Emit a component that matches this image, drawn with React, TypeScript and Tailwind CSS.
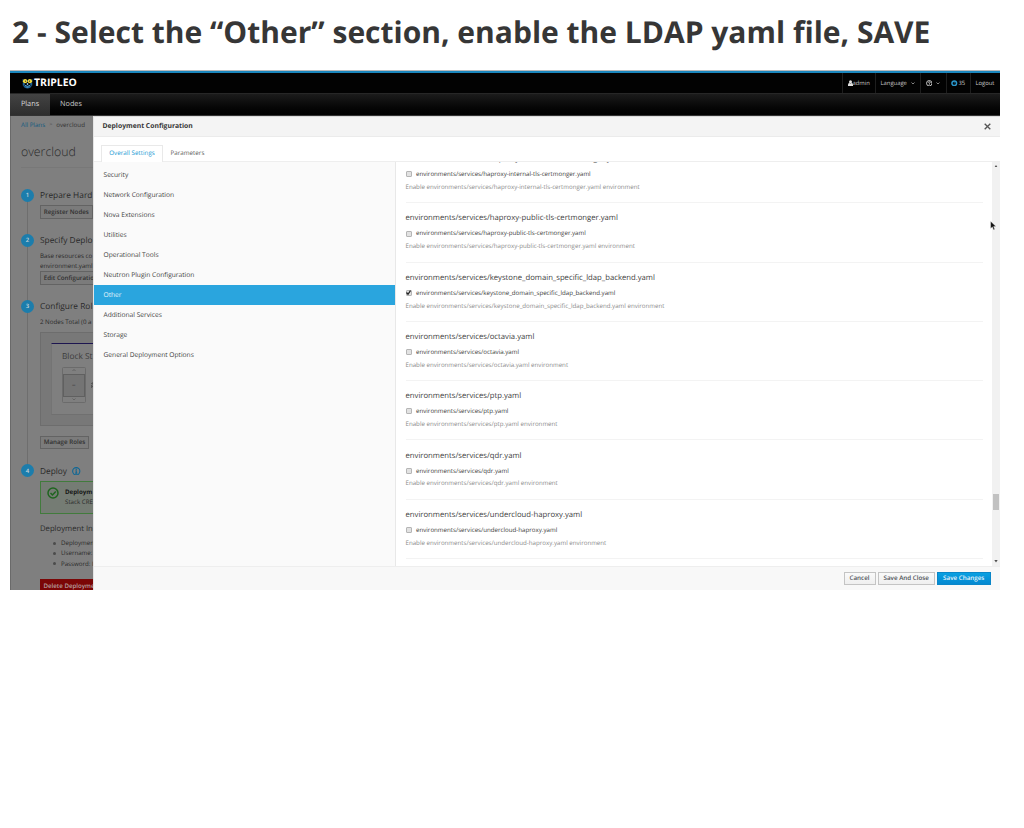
import type { ReactNode } from 'react';

const categories = [
  'Security',
  'Network Configuration',
  'Nova Extensions',
  'Utilities',
  'Operational Tools',
  'Neutron Plugin Configuration',
  'Other',
  'Additional Services',
  'Storage',
  'General Deployment Options',
];

const environments = [
  { name: 'haproxy-internal-tls-certmonger', on: false },
  { name: 'haproxy-public-tls-certmonger', on: false },
  { name: 'keystone_domain_specific_ldap_backend', on: true },
  { name: 'octavia', on: false },
  { name: 'ptp', on: false },
  { name: 'qdr', on: false },
  { name: 'undercloud-haproxy', on: false },
];

function Chevron({ up = false }: { up?: boolean }) {
  return (
    <svg viewBox="0 0 8 5" className="h-[2.500px] w-[4px]" fill="none" stroke="currentColor" strokeWidth="1.3">
      <path d={up ? 'M1 4l3-3 3 3' : 'M1 1l3 3 3-3'} />
    </svg>
  );
}

function Logo() {
  return (
    <svg viewBox="0 0 22 22" className="h-[11px] w-[11px]">
      <path d="M1 2l3 2h14l3-2v5h-20z" fill="#1c4f78" />
      <path d="M1.500 9h4v6h-4zM16.500 9h4v6h-4z" fill="#1c6399" />
      <path d="M2 14c2 9.500 16 9.500 18 0l-3 1.500H5z" fill="#1d5f92" />
      <circle cx="6.200" cy="6.300" r="4.300" fill="#f3dc3a" />
      <circle cx="15.800" cy="6.300" r="4.300" fill="#f3dc3a" />
      <circle cx="7" cy="6.300" r="1.300" fill="#333" />
      <circle cx="15" cy="6.300" r="1.300" fill="#333" />
      <path d="M11 9.500l2 2.500-2 2.500-2-2.500z" fill="#9fd0ee" />
      <path d="M6 15h3M13 15h3M9 18h4" stroke="#6fbce6" strokeWidth="1.600" />
    </svg>
  );
}

function TopItem({ width, children }: { width: string; children: ReactNode }) {
  return (
    <div className={`flex h-full shrink-0 items-center border-l border-[#1e1e1e] pl-[4.500px] ${width}`}>{children}</div>
  );
}

function TopBar() {
  return (
    <header className="shrink-0">
      <div className="h-px bg-[#b9babb]" />
      <div className="h-[2px] bg-[#1b86bd]" />
      <div className="flex h-[20px] items-center justify-between bg-[#020202]">
        <div className="flex items-center pl-[12px]">
          <Logo />
          <span className="ml-[1px] pt-px text-[10.400px] leading-none font-bold text-white">TRIPLEO</span>
        </div>
        <div className="flex h-full text-[5.850px] leading-none text-[#c9c9c9]">
          <TopItem width="w-[33px]">
            <svg viewBox="0 0 10 12" className="h-[6px] w-[5px]" fill="#e3e3e3">
              <circle cx="5" cy="3.4" r="3" />
              <path d="M0 12c-.3-4 1-6 2.800-6 1.400 1.200 3 1.200 4.400 0 1.800 0 3.100 2 2.800 6z" />
            </svg>
            <span className="pt-px">admin</span>
          </TopItem>
          <TopItem width="w-[45px]">
            <span className="pt-px">Language</span>
            <span className="ml-[4.500px]"><Chevron /></span>
          </TopItem>
          <TopItem width="w-[25.500px]">
            <svg viewBox="0 0 12 12" className="h-[6.500px] w-[6.500px]" fill="none" stroke="#d3d3d3" strokeWidth="1.7">
              <circle cx="6" cy="6" r="5" />
              <path d="M4.300 4.800c.2-2.200 3.600-2 3.400 0-.1 1.100-1.700 1-1.700 2.300M6 8v1.400" />
            </svg>
            <span className="ml-[4px]"><Chevron /></span>
          </TopItem>
          <TopItem width="w-[24.500px]">
            <svg viewBox="0 0 12 12" className="mr-[1px] h-[6.500px] w-[6.500px]" fill="none" stroke="#2a95c9">
              <circle cx="6" cy="6" r="4.300" strokeWidth="2.800" />
              <path d="M6 3v3.500" strokeWidth="1" />
            </svg>
            <span className="pt-px">35</span>
          </TopItem>
          <TopItem width="w-[30px]"><span className="pt-px">Logout</span></TopItem>
        </div>
      </div>
      <nav className="flex h-[22.500px] border-t border-b border-t-[#272727] border-b-[#333] bg-linear-to-b from-[#1c1c1c] to-[#010101] text-[7.300px] leading-none">
        <div className="flex w-[40px] items-center justify-center bg-linear-to-b from-[#434343] to-[#2e2e2e] pt-px text-[#dcdcdc]">Plans</div>
        <div className="flex items-center pt-px pl-[10px] text-[#c4c4c4]">Nodes</div>
      </nav>
    </header>
  );
}

function Step({ n, height, last = false, children }: { n: number; height: string; last?: boolean; children: ReactNode }) {
  return (
    <section className={`flex shrink-0 ${height}`}>
      <div className="ml-[10px] flex w-[13px] shrink-0 flex-col items-center">
        <div className="flex h-[13px] w-[13px] shrink-0 items-center justify-center rounded-full bg-[#1c7dac] text-[6px] leading-none font-semibold text-[#c3d3da]">{n}</div>
        {!last && <div className="w-px flex-1 bg-[#6e6e6e]" />}
      </div>
      <div className="ml-[6px] flex min-w-0 flex-1 flex-col items-start overflow-hidden whitespace-nowrap">{children}</div>
    </section>
  );
}

function DimButton({ children, open = false }: { children: ReactNode; open?: boolean }) {
  return (
    <div
      className={`flex h-[13.500px] shrink-0 items-center border border-[#636363] bg-[#7b7b7b] px-[2.800px] text-[6.200px] leading-none font-semibold text-[#303030] ${
        open ? 'border-r-0 pr-0' : ''
      }`}
    >
      {children}
    </div>
  );
}

function PlanPage() {
  return (
    <aside className="flex w-[83px] shrink-0 flex-col overflow-hidden border-l border-[#6a6a6a] bg-[#7f7f7f] text-[#2a2a2a]">
      <div className="h-[73px] shrink-0 pl-[10px] whitespace-nowrap">
        <div className="flex h-[19px] items-center text-[6.200px] leading-none">
          <span className="text-[#125a80]">All Plans</span>
          <span className="mx-[4px] text-[5.500px] text-[#4c4c4c]">&gt;</span>
          <span className="text-[#333]">overcloud</span>
        </div>
        <div className="flex h-[33.500px] items-center border-b border-[#787878] pt-[2.500px] text-[12.300px] leading-none font-light">overcloud</div>
      </div>
      <Step n={1} height="h-[45px]">
        <div className="h-[16.500px] shrink-0 pt-[2.800px] text-[8.350px] leading-[10px]">Prepare Hard</div>
        <DimButton>Register Nodes</DimButton>
      </Step>
      <Step n={2} height="h-[66px]">
        <div className="h-[16.500px] shrink-0 pt-[2.800px] text-[8.350px] leading-[10px]">Specify Deplo</div>
        <div className="h-[21px] shrink-0 pt-[.500px] text-[6.200px] leading-[10.500px]">
          Base resources co
          <br />
          environment.yaml
        </div>
        <DimButton open>Edit Configuratio</DimButton>
      </Step>
      <Step n={3} height="h-[164.500px]">
        <div className="h-[17px] shrink-0 pt-[2.800px] text-[8.350px] leading-[10px]">Configure Rol</div>
        <div className="h-[15.500px] shrink-0 text-[6.160px] leading-[10.500px]">2 Nodes Total (0 a</div>
        <div className="h-[93.500px] w-full shrink-0 border border-r-0 border-[#6d6d6d] bg-[#787878] pt-[10px] pl-[10px]">
          <div className="h-[72px] w-full rounded-l-[1px] border-t-[1.500px] border-b border-l border-t-[#1d1550] border-b-[#707070] border-l-[#747474] bg-[#7f7f7f] pl-[10px]">
            <div className="pt-[7.800px] text-[8.300px] leading-[10px] text-[#3b3b3b]">Block St</div>
            <div className="mt-[5px] flex items-center">
              <div className="flex h-[36.500px] w-[23.500px] shrink-0 flex-col rounded-[1.500px] border border-[#6b6b6b] text-[#555]">
                <div className="flex flex-1 items-center justify-center"><Chevron up /></div>
                <div className="flex h-[23px] items-center justify-center border border-[#606060] bg-[#747474] text-[7px] leading-none text-[#333]">–</div>
                <div className="flex flex-1 items-center justify-center"><Chevron /></div>
              </div>
              <svg viewBox="0 0 3 10" className="ml-[5.500px] h-[10px] w-[3px]" fill="none" stroke="#333" strokeWidth=".9">
                <path d="M3 1.500L1 2.500v1h2M1 9.500v-4l2 2.500" />
              </svg>
            </div>
          </div>
        </div>
        <div className="mt-[10px]"><DimButton>Manage Roles</DimButton></div>
      </Step>
      <Step n={4} height="h-[126px]" last>
        <div className="flex h-[17px] shrink-0 items-start pt-[2.800px] text-[8.300px] leading-[10px]">
          Deploy
          <svg viewBox="0 0 16 16" className="ml-[5px] h-[8.500px] w-[8.500px]" fill="none" stroke="#0d6796" strokeWidth="2">
            <circle cx="8" cy="8" r="6.800" />
            <path d="M8 3.500v2M6.500 7H8v4.500M6 11.500h4" />
          </svg>
        </div>
        <div className="flex h-[33px] w-full shrink-0 border border-r-0 border-[#417b3c] bg-[#757c74] pt-[4.500px] pl-[6px]">
          <svg viewBox="0 0 24 24" className="h-[12px] w-[12px] shrink-0" fill="none" stroke="#1f651f" strokeWidth="3">
            <circle cx="12" cy="12" r="10" />
            <path d="M7 12l4 4 6.500-7" />
          </svg>
          <div className="ml-[6px] pt-[.500px] text-[6.160px] leading-[10.400px]">
            <div className="font-bold text-[#161616]">Deploym</div>
            <div>Stack CRE</div>
          </div>
        </div>
        <div className="mt-[9.800px] h-[14.200px] shrink-0 text-[7.700px] leading-[10px]">Deployment In</div>
        <ul className="shrink-0 text-[6.160px] leading-[10.300px]">
          {['Deploymen', 'Username:', 'Password: I'].map((t) => (
            <li key={t} className="flex items-center pl-[12.500px]">
              <span className="mr-[5.500px] h-[3px] w-[3px] rounded-full bg-[#4c4c4c]" />
              {t}
            </li>
          ))}
        </ul>
        <div className="mt-[10.500px] flex h-[13.500px] w-full shrink-0 items-center bg-[#7b0606] pl-[3.500px] text-[6.160px] leading-none font-semibold text-[#b5a0a0]">Delete Deployme</div>
      </Step>
    </aside>
  );
}

function Environment({ name, on }: { name: string; on: boolean }) {
  const file = `environments/services/${name}.yaml`;
  return (
    <div className="mr-[9px] ml-[10px] h-[59.270px] shrink-0 border-b border-[#f3f3f3] pt-[9.200px] whitespace-nowrap">
      <div className="text-[7.715px] leading-[12px] text-[#414141]">{file}</div>
      <label className="mt-[4.600px] flex h-[9px] items-center text-[6.160px] leading-none text-[#3c3c3c]">
        <span className="mr-[4.500px] flex h-[6px] w-[6px] items-center justify-center rounded-[1px] border border-[#b5b5b5] bg-[#e2e2e2]">
          {on && (
            <svg viewBox="0 0 10 10" className="h-[5px] w-[5px] shrink-0" fill="none" stroke="#222" strokeWidth="2.500">
              <path d="M1 5l3 3.500L9 1" />
            </svg>
          )}
        </span>
        {file}
      </label>
      <div className="mt-[3.300px] text-[6.170px] leading-[9px] text-[#8b8b8b]">Enable {file} environment</div>
    </div>
  );
}

function FooterButton({ children, primary = false, width }: { children: ReactNode; primary?: boolean; width: string }) {
  return (
    <div
      className={`flex h-[13.500px] items-center justify-center border text-[6.250px] leading-none font-semibold ${width} ${
        primary
          ? 'border-[#0a86c8] bg-linear-to-b from-[#0aa0e2] to-[#0488d0] text-[#e8f5fc]'
          : 'border-[#c4c4c4] bg-linear-to-b from-[#fafafa] to-[#efefef] text-[#4d5258]'
      }`}
    >
      {children}
    </div>
  );
}

function ConfigDialog() {
  return (
    <main className="flex min-w-0 flex-1 flex-col border-t border-l border-t-[#dcdcdc] border-l-[#e5e5e5] bg-white">
      <div className="flex h-[20.500px] shrink-0 items-center justify-between border-b border-[#ebebeb] bg-[#f4f4f4] pr-[9.500px] pl-[8.500px]">
        <h2 className="pt-px text-[6.800px] leading-none font-bold text-[#363636]">Deployment Configuration</h2>
        <svg viewBox="0 0 10 10" className="h-[7px] w-[7px]" stroke="#555" strokeWidth="1.900">
          <path d="M1 1l8 8M9 1L1 9" />
        </svg>
      </div>
      <div className="flex h-[24.500px] shrink-0 items-end border-b border-[#eee] pl-[7px] text-[6.270px] leading-none">
        <div className="-mb-px flex h-[17px] w-[62px] items-center justify-center border border-b-0 border-[#e9e9e9] bg-white text-[#1c9bd4]">Overall Settings</div>
        <div className="flex h-[16px] items-center pt-[1.500px] pl-[7.500px] text-[#5d5d5d]">Parameters</div>
      </div>
      <div className="flex min-h-0 flex-1">
        <div className="w-[301.500px] shrink-0 border-r border-[#e8e8e8] bg-[#fafafa] pt-[3.200px]">
          {categories.map((c) => (
            <div
              key={c}
              className={`flex h-[20.080px] items-center pt-[.300px] pl-[9.500px] text-[6.650px] leading-none ${
                c === 'Other' ? 'bg-[#2aa5de] text-[#e4f4fb]' : 'text-[#3f3f3f]'
              }`}
            >
              {c}
            </div>
          ))}
        </div>
        <div className="flex min-w-0 flex-1 flex-col overflow-hidden">
          <div className="-mt-[17.500px] flex flex-col">
            {environments.map((e) => (
              <Environment key={e.name} {...e} />
            ))}
          </div>
        </div>
        <div className="flex w-[8px] shrink-0 flex-col items-center justify-between bg-[#f1f1f1] py-[3px]">
          <svg viewBox="0 0 4 3" className="h-[2.500px] w-[4px]" fill="#505050"><path d="M2 0l2 3H0z" /></svg>
          <div className="mt-[276px] h-[16px] w-[6px] bg-[#c1c1c1]" />
          <svg viewBox="0 0 4 3" className="h-[2.500px] w-[4px]" fill="#505050"><path d="M2 3l2-3H0z" /></svg>
        </div>
      </div>
      <div className="flex h-[24.500px] shrink-0 items-center justify-end gap-[2.500px] border-t border-[#eee] bg-[#f8f8f8] pr-[9.500px]">
        <FooterButton width="w-[32px]">Cancel</FooterButton>
        <FooterButton width="w-[56.500px]">Save And Close</FooterButton>
        <FooterButton width="w-[53.500px]" primary>Save Changes</FooterButton>
      </div>
    </main>
  );
}

export default function App() {
  return (
    <div className="relative h-[828px] w-[1024px] overflow-hidden bg-white font-['Open_Sans',sans-serif] [text-rendering:geometricPrecision]">
      <h1 className="h-[70px] pt-[12px] pl-[12px] text-[30px] leading-[40px] font-bold whitespace-nowrap text-[#363636]">
        2 - Select the “Other” section, enable the LDAP yaml file, SAVE
      </h1>
      <div className="ml-[10px] flex h-[520px] w-[990px] flex-col overflow-hidden">
        <TopBar />
        <div className="flex min-h-0 flex-1">
          <PlanPage />
          <ConfigDialog />
        </div>
      </div>
      <svg viewBox="0 0 10 16" className="absolute top-[221px] left-[990px] h-[10px] w-[6px]" fill="#111" stroke="#fff" strokeWidth=".6">
        <path d="M1 0v12l3-2.500 2 5 2-1-2-4.500h4z" />
      </svg>
    </div>
  );
}
